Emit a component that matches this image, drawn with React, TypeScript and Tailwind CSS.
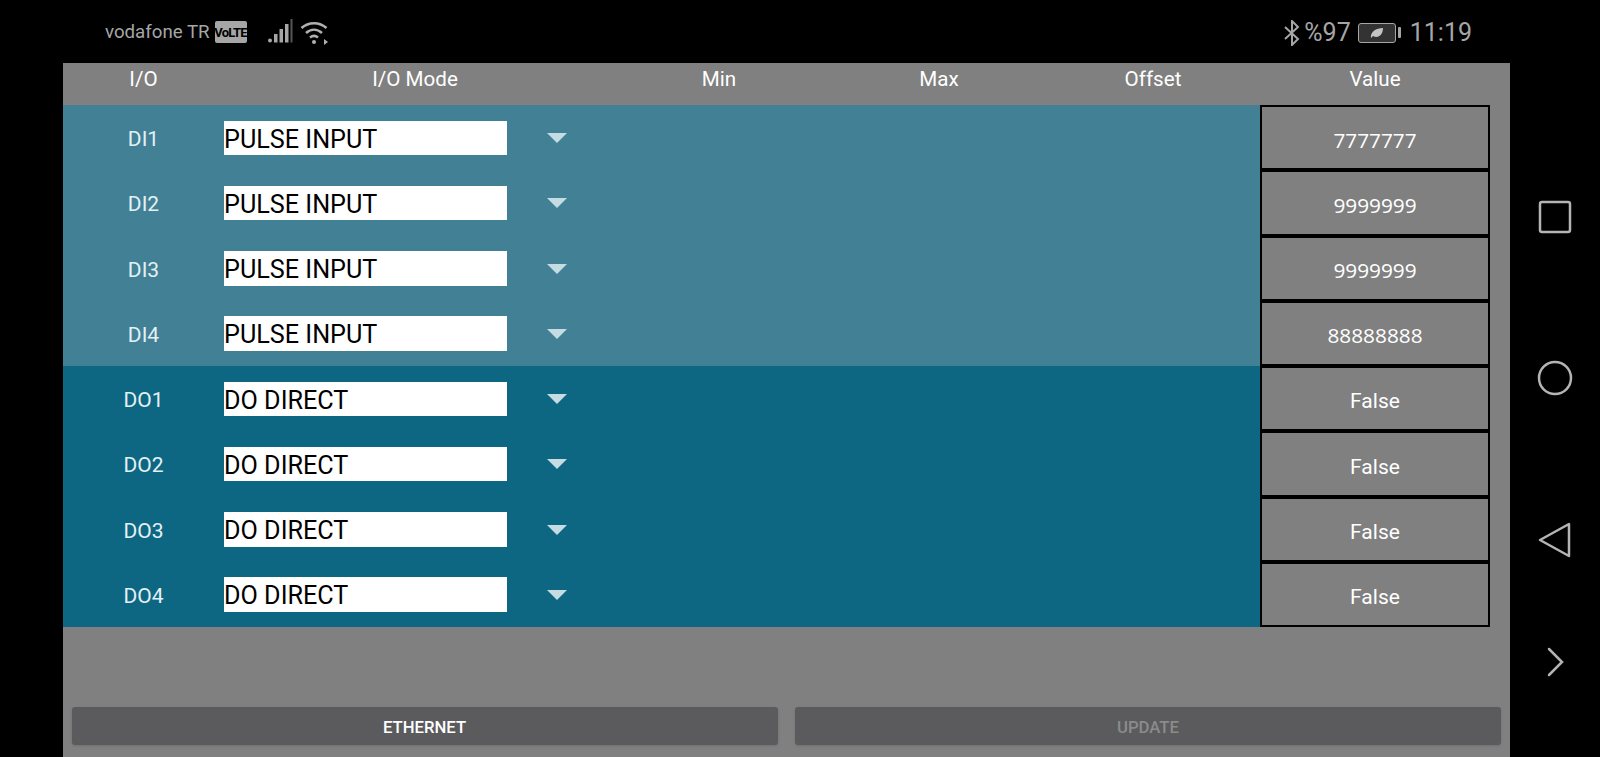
const font = "font-['Roboto',sans-serif]";

interface Row {
  io: string;
  mode: string;
  value: string;
}

const inputs: Row[] = [
  { io: "DI1", mode: "PULSE INPUT", value: "7777777" },
  { io: "DI2", mode: "PULSE INPUT", value: "9999999" },
  { io: "DI3", mode: "PULSE INPUT", value: "9999999" },
  { io: "DI4", mode: "PULSE INPUT", value: "88888888" },
];

const outputs: Row[] = [
  { io: "DO1", mode: "DO DIRECT", value: "False" },
  { io: "DO2", mode: "DO DIRECT", value: "False" },
  { io: "DO3", mode: "DO DIRECT", value: "False" },
  { io: "DO4", mode: "DO DIRECT", value: "False" },
];

function IoRow({ row, color }: { row: Row; color: string }) {
  const numeric = row.value !== "False";
  return (
    <div className="flex h-[65.25px]">
      <div className={`flex w-[1197px] ${color}`}>
        <div className="w-[161px] pt-[17px] text-center text-[21px] leading-[34px] text-[#e3f1f5]">{row.io}</div>
        <div className="mt-[15.5px] h-[34.5px] w-[283px] bg-white text-[25.2px] leading-[37px] text-black">{row.mode}</div>
        <svg className="ml-[40px] mt-[28px] h-[10px] w-[20px]" viewBox="0 0 20 10">
          <path d="M0 0H20L10 10Z" fill="#c5dce2" />
        </svg>
      </div>
      <div
        className={`flex w-[230px] items-center justify-center border-2 border-black bg-[#808080] text-white ${
          numeric ? "pt-[5px] font-['Open_Sans',sans-serif] text-[20.8px]" : "pt-[7px] text-[21px]"
        }`}
      >
        {row.value}
      </div>
    </div>
  );
}

function StatusBar() {
  return (
    <div className="flex h-[63px] items-center justify-between pl-[105px] pr-[128px] pt-[2px] text-[#a6a6a6]">
      <div className="flex items-center">
        <span className="text-[18.7px]">vodafone TR</span>
        <span className="ml-[5px] flex h-[22px] w-[32px] items-center justify-center rounded-[2px] bg-[#a6a6a6] text-[13px] font-bold tracking-[-0.8px] text-black">
          VoLTE
        </span>
        <svg className="ml-[20px] h-[26px] w-[26px]" viewBox="0 0 26 26" fill="#a6a6a6">
          <circle cx="3" cy="21.5" r="2" />
          <rect x="7" y="15" width="3.5" height="8.5" />
          <rect x="12.5" y="10" width="3.5" height="13.5" />
          <rect x="18" y="5" width="3.5" height="18.5" />
          <rect x="23.5" y="0" width="2" height="23.5" fill="#555" />
        </svg>
        <svg className="ml-[7px] h-[26px] w-[30px]" viewBox="0 0 30 26" fill="none" stroke="#b0b0b0" strokeWidth="2.5">
          <path d="M1.5 9C8.5 2.5 19.5 2.5 26.5 9" />
          <path d="M6 14C11 9.5 17 9.5 22 14" />
          <path d="M10 18.500C12.500 16.500 15.500 16.500 18 18.500" />
          <circle cx="14" cy="23" r="2" fill="#b0b0b0" stroke="none" />
          <path d="M24 20L28 23L24 26Z" fill="#b0b0b0" stroke="none" />
        </svg>
      </div>
      <div className="flex items-center">
        <svg className="h-[26px] w-[16px]" viewBox="0 0 16 26" fill="none" stroke="#a6a6a6" strokeWidth="2">
          <path d="M1 7L14 19L8 25V1L14 7L1 19" />
        </svg>
        <span className="ml-[4px] text-[25px]">%97</span>
        <div className="ml-[7px] flex h-[20px] w-[38px] items-center justify-center rounded-[3px] border border-[#a6a6a6] bg-[#333]">
          <svg className="h-[12px] w-[14px]" viewBox="0 0 14 12">
            <path d="M1 11C0 5 6 1 13 1C13 8 8 12 3 9Z" fill="#c4c4c4" />
          </svg>
        </div>
        <div className="ml-[2px] h-[11px] w-[3px] rounded-[1px] bg-[#a6a6a6]" />
        <span className="ml-[9px] text-[25px]">11:19</span>
      </div>
    </div>
  );
}

function NavIcons() {
  return (
    <div className="flex flex-1 flex-col items-center pt-[133.5px]">
      <svg className="h-[40px] w-[40px]" viewBox="0 0 40 40" fill="none" stroke="#b4b4b4" strokeWidth="2.5">
        <rect x="5" y="5" width="30" height="30" rx="2" />
      </svg>
      <svg className="mt-[121.5px] h-[40px] w-[40px]" viewBox="0 0 40 40" fill="none" stroke="#b4b4b4" strokeWidth="2.5">
        <circle cx="20" cy="20" r="16" />
      </svg>
      <svg className="mt-[121.5px] h-[40px] w-[40px]" viewBox="0 0 40 40" fill="none" stroke="#b4b4b4" strokeWidth="2.5" strokeLinejoin="round">
        <path d="M5 20L34 4V36Z" />
      </svg>
      <svg className="mt-[82px] h-[40px] w-[40px]" viewBox="0 0 40 40" fill="none" stroke="#b4b4b4" strokeWidth="2.5" strokeLinecap="round">
        <path d="M14 7L27 20L14 33" />
      </svg>
    </div>
  );
}

export default function App() {
  return (
    <div className={`flex h-[757px] w-[1600px] flex-col overflow-hidden bg-black ${font}`}>
      <StatusBar />
      <div className="flex flex-1 pl-[63px]">
        <div className="flex w-[1447px] flex-col bg-[#808080]">
          <div className="flex h-[42px] items-center pb-[10px] text-center text-[20.6px] text-white">
            <div className="w-[161px]">I/O</div>
            <div className="w-[382px]">I/O Mode</div>
            <div className="w-[226px]">Min</div>
            <div className="w-[214px]">Max</div>
            <div className="w-[214px]">Offset</div>
            <div className="w-[230px]">Value</div>
          </div>
          {inputs.map((row) => (
            <IoRow key={row.io} row={row} color="bg-[#428095]" />
          ))}
          {outputs.map((row) => (
            <IoRow key={row.io} row={row} color="bg-[#0e6782]" />
          ))}
          <div className="mt-auto flex gap-[17.500px] pb-[12px] pl-[8.500px]">
            <button className="h-[38px] w-[706px] rounded-[3px] bg-[#5b5b5d] pt-[3px] text-[16.7px] font-medium text-white shadow-sm">
              ETHERNET
            </button>
            <button className="h-[38px] w-[706px] rounded-[3px] bg-[#5b5b5d] pt-[3px] text-[16.7px] font-medium text-[#8b8b8b] shadow-sm">
              UPDATE
            </button>
          </div>
        </div>
        <NavIcons />
      </div>
    </div>
  );
}
